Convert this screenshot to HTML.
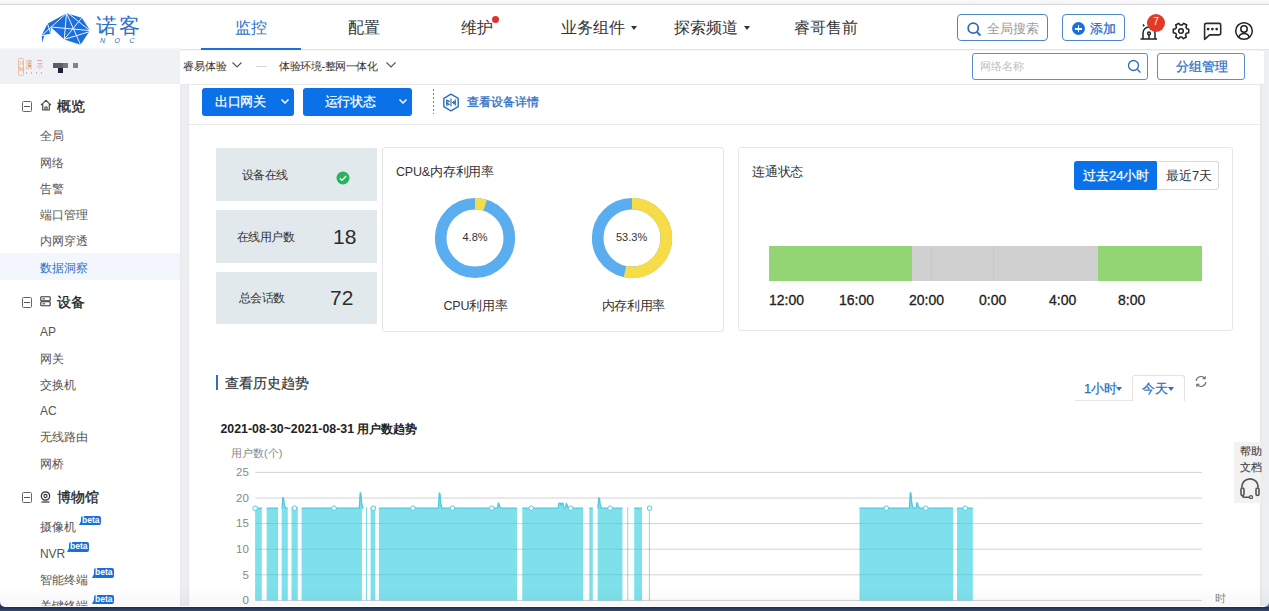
<!DOCTYPE html>
<html><head><meta charset="utf-8">
<style>
*{box-sizing:border-box;margin:0;padding:0}
html,body{width:1269px;height:611px;overflow:hidden;background:#fff;font-family:"Liberation Sans",sans-serif;color:#333}
.a{position:absolute;white-space:nowrap}
.t{line-height:1}
</style></head><body>
<!-- top strip -->
<div class="a" style="left:0;top:0;width:1269px;height:4px;background:linear-gradient(180deg,#f8f8fa,#f8f8fa 2.5px,#ececee)"></div>
<div class="a" style="left:0;top:4px;width:1269px;height:1px;background:#dadade"></div>
<!-- header -->
<div class="a" style="left:0;top:5px;width:1269px;height:44px;background:#fff"></div>
<div class="a" style="left:180px;top:49px;width:1089px;height:1px;background:#e4e4e4"></div><div class="a" style="left:180px;top:50px;width:1089px;height:1px;background:#f6f6f6"></div>

<!-- logo -->
<svg class="a" style="left:36px;top:8px" width="60" height="40" viewBox="0 0 60 40">
<polygon points="6.5,34.7 5.6,27.6 11.5,15.7 30.5,5.2 45.8,9.8 54,22.6 44.5,36.7 28.2,31.4 14.7,19 14.7,25.9 8.2,27.2" fill="#1b70de"/>
<g stroke="#fff" stroke-width="0.9" fill="none">
<line x1="30.5" y1="5.2" x2="28.2" y2="31.4"/>
<line x1="30.5" y1="5.2" x2="44.5" y2="36.7"/>
<line x1="30.5" y1="5.2" x2="6.5" y2="26.8"/>
<line x1="45.8" y1="9.8" x2="28.2" y2="31.4"/>
<line x1="14.7" y1="19" x2="54" y2="22.6"/>
<line x1="32" y1="5.2" x2="54" y2="22.6"/>
<line x1="28.2" y1="31.4" x2="54" y2="23.5"/>
<line x1="11.5" y1="15.7" x2="14.7" y2="25.9"/>
<line x1="4" y1="27.9" x2="15" y2="26.3"/>
</g>
</svg>
<div class="a t" style="left:96px;top:14.8px;font-size:21px;letter-spacing:1.8px;color:#2a6fc9">诺客</div>
<div class="a t" style="left:100px;top:37px;font-size:7px;color:#2a6fc9;font-style:italic;letter-spacing:9.5px">NOC</div>

<!-- nav -->
<div class="a t" style="left:235px;top:20px;font-size:16px;color:#2b6fc7">监控</div>
<div class="a" style="left:201px;top:48px;width:100px;height:2px;background:#1e6fd5"></div>
<div class="a t" style="left:348px;top:20px;font-size:16px;color:#333">配置</div>
<div class="a t" style="left:461px;top:20px;font-size:16px;color:#333">维护</div>
<div class="a" style="left:492px;top:16px;width:7px;height:7px;border-radius:50%;background:#e0322b"></div>
<div class="a t" style="left:561px;top:20px;font-size:16px;color:#333">业务组件</div>
<div class="a" style="left:631px;top:26px;border-left:3px solid transparent;border-right:3px solid transparent;border-top:4px solid #333"></div>
<div class="a t" style="left:674px;top:20px;font-size:16px;color:#333">探索频道</div>
<div class="a" style="left:744px;top:26px;border-left:3px solid transparent;border-right:3px solid transparent;border-top:4px solid #333"></div>
<div class="a t" style="left:794px;top:20px;font-size:16px;color:#333">睿哥售前</div>

<!-- search & add -->
<div class="a" style="left:957px;top:14px;width:91px;height:27px;border:1px solid #4f86c6;border-radius:4px"></div>
<svg class="a" style="left:967px;top:22px" width="15" height="15" viewBox="0 0 15 15"><circle cx="6.2" cy="6.2" r="5" stroke="#2f6cb8" stroke-width="1.8" fill="none"/><line x1="9.8" y1="9.8" x2="13.5" y2="13.5" stroke="#2f6cb8" stroke-width="1.8"/></svg>
<div class="a t" style="left:987px;top:22px;font-size:13px;color:#9a9a9a">全局搜索</div>
<div class="a" style="left:1062px;top:14px;width:63px;height:27px;border:1px solid #4f86c6;border-radius:4px"></div>
<div class="a" style="left:1072px;top:22px;width:13px;height:13px;border-radius:50%;background:#1b6fdc"></div>
<div class="a" style="left:1075px;top:28px;width:7px;height:1.6px;background:#fff"></div>
<div class="a" style="left:1077.7px;top:25.2px;width:1.6px;height:7px;background:#fff"></div>
<div class="a t" style="left:1090px;top:22px;font-size:13px;color:#2b6fc7;-webkit-text-stroke:0.25px #2b6fc7">添加</div>

<!-- icons -->
<svg class="a" style="left:1138px;top:20px" width="22" height="22" viewBox="0 0 22 22">
<g stroke="#222" stroke-width="1.5" fill="none">
<line x1="2.5" y1="19" x2="19" y2="19"/>
<path d="M5 19 V13 a6 6 0 0 1 12 0 V19"/>
<circle cx="11" cy="13.5" r="1.4"/>
<line x1="11" y1="15" x2="11" y2="19"/>
<line x1="5" y1="4.5" x2="6.2" y2="6.2"/>
</g></svg>
<div class="a" style="left:1147px;top:13.5px;width:18px;height:18px;border-radius:50%;background:#e13a29;color:#fff;font-size:10px;text-align:center;line-height:15px">7</div>
<svg class="a" style="left:1170.5px;top:20.8px" width="20" height="20" viewBox="0 0 20 20">
<path transform="rotate(90 10 10)" d="M8.3 2.3h3.4l.5 2.3 1.6.9 2.2-.8 1.7 2.9-1.7 1.6v1.6l1.7 1.6-1.7 2.9-2.2-.8-1.6.9-.5 2.3H8.3l-.5-2.3-1.6-.9-2.2.8-1.7-2.9 1.7-1.6V8.8L2.3 7.2 4 4.3l2.2.8 1.6-.9z" stroke="#222" stroke-width="1.5" fill="none" stroke-linejoin="round"/>
<circle cx="10" cy="10" r="2.3" stroke="#222" stroke-width="1.5" fill="none"/>
</svg>
<svg class="a" style="left:1202px;top:20.5px" width="21" height="20" viewBox="0 0 21 20">
<path d="M2.6 4a1.6 1.6 0 0 1 1.6-1.6h12.9a1.6 1.6 0 0 1 1.6 1.6v8.3a1.6 1.6 0 0 1-1.6 1.6H7.6L2.6 18.3z" stroke="#2a2a30" stroke-width="1.6" fill="none" stroke-linejoin="round"/>
<circle cx="6.1" cy="8.1" r="1.4" fill="#2a2a30"/><circle cx="10.4" cy="8.1" r="1.4" fill="#2a2a30"/><circle cx="14.7" cy="8.1" r="1.4" fill="#2a2a30"/>
</svg>
<svg class="a" style="left:1234px;top:20.5px" width="20" height="20" viewBox="0 0 20 20">
<circle cx="10" cy="10" r="8.3" stroke="#222" stroke-width="1.5" fill="none"/>
<circle cx="10" cy="8" r="3.2" stroke="#222" stroke-width="1.5" fill="none"/>
<path d="M4.6 16.2c1.2-2.6 3-3.6 5.4-3.6s4.2 1 5.4 3.6" stroke="#222" stroke-width="1.5" fill="none"/>
</svg>

<!-- sidebar -->
<div class="a" style="left:0;top:48px;width:180px;height:36px;background:linear-gradient(180deg,#f6f7f9,#eff1f5 2px)"></div>
<div class="a" style="left:0;top:84px;width:180px;height:523px;background:#fff"></div>


<!-- sidebar logo -->
<div class="a" style="left:17.5px;top:58px;width:6px;height:17.5px;border:1px solid #ecbfa3;border-radius:1.5px"></div>
<div class="a t" style="left:18.5px;top:60px;font-size:5px;line-height:6px;color:#e49a6a;white-space:normal;width:5px">只制</div>
<div class="a t" style="left:25.5px;top:59.5px;font-size:10px;color:#e07b3c;transform:scaleX(0.6);transform-origin:0 0">演</div>
<div class="a t" style="left:36.5px;top:60px;font-size:9.5px;color:#e49a6a;transform:scaleX(0.6);transform-origin:0 0">示</div>
<div class="a" style="left:37px;top:60px;width:5px;height:1px;background:#eaa0b0"></div>
<div class="a" style="left:26px;top:71.5px;width:16px;height:2.5px;background:repeating-linear-gradient(90deg,#e8b08e 0 1px,transparent 1px 5px)"></div>
<div class="a" style="left:53px;top:63px;width:10px;height:5px;background:#5c5f68"></div>
<div class="a" style="left:63px;top:63px;width:5px;height:5px;background:#78797e"></div>
<div class="a" style="left:58px;top:68px;width:5px;height:4.5px;background:#1e2136"></div>
<div class="a" style="left:72.7px;top:63px;width:5px;height:5px;background:#808289"></div>

<!-- sidebar menu -->
<div class="a" style="left:0;top:253px;width:180px;height:27px;background:#f3f7fd"></div>
<div class="a" style="left:21.5px;top:101px;width:10.5px;height:10.5px;border:1px solid #666;border-radius:1.5px"></div>
<div class="a" style="left:24px;top:106px;width:5.5px;height:1px;background:#555"></div>
<svg class="a" style="left:39.5px;top:99px" width="12" height="12" viewBox="0 0 12 12"><path d="M1 6.2 6 1.3 11 6.2M2.7 4.7V11H9.3V4.7M5 11V8H7V11" stroke="#444" stroke-width="1.15" fill="none" stroke-linejoin="round"/></svg>
<div class="a t" style="left:57px;top:99px;font-size:14px;color:#222;-webkit-text-stroke:0.3px #222">概览</div>
<div class="a t" style="left:40px;top:130.2px;font-size:12px;letter-spacing:-0.1px;color:#555">全局</div>
<div class="a t" style="left:40px;top:156.5px;font-size:12px;letter-spacing:-0.1px;color:#555">网络</div>
<div class="a t" style="left:40px;top:182.8px;font-size:12px;letter-spacing:-0.1px;color:#555">告警</div>
<div class="a t" style="left:40px;top:209.1px;font-size:12px;letter-spacing:-0.1px;color:#555">端口管理</div>
<div class="a t" style="left:40px;top:235.4px;font-size:12px;letter-spacing:-0.1px;color:#555">内网穿透</div>
<div class="a t" style="left:40px;top:261.7px;font-size:12px;letter-spacing:-0.1px;color:#2b6fc7">数据洞察</div>
<div class="a" style="left:21.5px;top:297px;width:10.5px;height:10.5px;border:1px solid #666;border-radius:1.5px"></div>
<div class="a" style="left:24px;top:302px;width:5.5px;height:1px;background:#555"></div>
<svg class="a" style="left:40px;top:296px" width="11" height="11" viewBox="0 0 11 11"><rect x="0.8" y="0.8" width="9.4" height="4" rx=".8" stroke="#333" stroke-width="1.1" fill="none"/><rect x="0.8" y="5.8" width="9.4" height="4" rx=".8" stroke="#333" stroke-width="1.1" fill="none"/><line x1="2.5" y1="2.8" x2="5" y2="2.8" stroke="#333" stroke-width="1"/><line x1="2.5" y1="7.8" x2="5" y2="7.8" stroke="#333" stroke-width="1"/></svg>
<div class="a t" style="left:57px;top:295px;font-size:14px;color:#222;-webkit-text-stroke:0.3px #222">设备</div>
<div class="a t" style="left:40px;top:326.2px;font-size:12px;letter-spacing:-0.1px;color:#555">AP</div>
<div class="a t" style="left:40px;top:352.5px;font-size:12px;letter-spacing:-0.1px;color:#555">网关</div>
<div class="a t" style="left:40px;top:378.8px;font-size:12px;letter-spacing:-0.1px;color:#555">交换机</div>
<div class="a t" style="left:40px;top:405.1px;font-size:12px;letter-spacing:-0.1px;color:#555">AC</div>
<div class="a t" style="left:40px;top:431.4px;font-size:12px;letter-spacing:-0.1px;color:#555">无线路由</div>
<div class="a t" style="left:40px;top:457.7px;font-size:12px;letter-spacing:-0.1px;color:#555">网桥</div>
<div class="a" style="left:21.5px;top:492px;width:10.5px;height:10.5px;border:1px solid #666;border-radius:1.5px"></div>
<div class="a" style="left:24px;top:497px;width:5.5px;height:1px;background:#555"></div>
<svg class="a" style="left:40px;top:491px" width="11" height="12" viewBox="0 0 11 12"><circle cx="5.5" cy="5" r="4.2" stroke="#333" stroke-width="1.2" fill="none"/><circle cx="5.5" cy="5" r="1.6" stroke="#333" stroke-width="1.1" fill="none"/><line x1="1.5" y1="11" x2="9.5" y2="11" stroke="#333" stroke-width="1.2"/></svg>
<div class="a t" style="left:57px;top:490px;font-size:14px;color:#222;-webkit-text-stroke:0.3px #222">博物馆</div>
<div class="a t" style="left:40px;top:521.2px;font-size:12px;letter-spacing:-0.1px;color:#555">摄像机</div>
<div class="a" style="left:81.0px;top:515.7px;width:19.5px;height:9.7px;background:#1b6fdc;border-radius:2px;color:#fff;font-size:8.5px;line-height:9.7px;text-align:center;font-weight:bold">beta</div><div class="a" style="left:78.5px;top:519.4px;width:0;height:0;border-left:3px solid transparent;border-bottom:6px solid #1b6fdc"></div>
<div class="a t" style="left:40px;top:547.5px;font-size:12px;letter-spacing:-0.1px;color:#555">NVR</div>
<div class="a" style="left:69.0px;top:542.0px;width:19.5px;height:9.7px;background:#1b6fdc;border-radius:2px;color:#fff;font-size:8.5px;line-height:9.7px;text-align:center;font-weight:bold">beta</div><div class="a" style="left:66.5px;top:545.6999999999999px;width:0;height:0;border-left:3px solid transparent;border-bottom:6px solid #1b6fdc"></div>
<div class="a t" style="left:40px;top:573.8px;font-size:12px;letter-spacing:-0.1px;color:#555">智能终端</div>
<div class="a" style="left:94.0px;top:568.3px;width:19.5px;height:9.7px;background:#1b6fdc;border-radius:2px;color:#fff;font-size:8.5px;line-height:9.7px;text-align:center;font-weight:bold">beta</div><div class="a" style="left:91.5px;top:571.9999999999999px;width:0;height:0;border-left:3px solid transparent;border-bottom:6px solid #1b6fdc"></div>
<div class="a t" style="left:40px;top:600.1px;font-size:12px;letter-spacing:-0.1px;color:#555">关键终端</div>
<div class="a" style="left:94.0px;top:594.5999999999999px;width:19.5px;height:9.7px;background:#1b6fdc;border-radius:2px;color:#fff;font-size:8.5px;line-height:9.7px;text-align:center;font-weight:bold">beta</div><div class="a" style="left:91.5px;top:598.2999999999998px;width:0;height:0;border-left:3px solid transparent;border-bottom:6px solid #1b6fdc"></div>

<!-- content bg -->
<div class="a" style="left:180px;top:83px;width:1080px;height:524px;background:#ebeef2"></div><div class="a" style="left:180px;top:83px;width:9px;height:524px;background:linear-gradient(90deg,#e6e8eb,#eceef2 2px,#eceef2 7px,#e4e6ea)"></div>
<div class="a" style="left:1260px;top:50px;width:9px;height:557px;background:linear-gradient(90deg,#e2e4e8,#ebeef1 2px,#edf1f4)"></div>
<!-- subheader -->
<div class="a" style="left:180px;top:51px;width:1084px;height:34px;background:#fff;border-bottom:1px solid #e9e9e9"></div>
<!-- toolbar -->
<div class="a" style="left:189px;top:85px;width:1071px;height:40px;background:#fff;border-bottom:1px solid #ebebeb"></div>
<!-- main panel -->
<div class="a" style="left:189px;top:125px;width:1071px;height:482px;background:#fff"></div>


<!-- subheader content -->
<div class="a t" style="left:183px;top:61px;font-size:11px;color:#333">睿易体验</div>
<svg class="a" style="left:231px;top:61px" width="12" height="8" viewBox="0 0 12 8"><path d="M1.5 1.5 6 6 10.5 1.5" stroke="#555" stroke-width="1.1" fill="none"/></svg>
<div class="a" style="left:256px;top:66px;width:11px;height:1px;background:#d6d6d6"></div>
<div class="a t" style="left:279px;top:61px;font-size:11px;letter-spacing:-0.4px;color:#333">体验环境-整网一体化</div>
<svg class="a" style="left:385px;top:61px" width="12" height="8" viewBox="0 0 12 8"><path d="M1.5 1.5 6 6 10.5 1.5" stroke="#555" stroke-width="1.1" fill="none"/></svg>
<div class="a" style="left:972px;top:53px;width:176px;height:27px;border:1px solid #5a8dcc;border-radius:3px"></div>
<div class="a t" style="left:980px;top:61px;font-size:11px;color:#c0c0c0">网络名称</div>
<svg class="a" style="left:1127px;top:59px" width="15" height="15" viewBox="0 0 15 15"><circle cx="6.5" cy="6.5" r="5" stroke="#2f6cb8" stroke-width="1.3" fill="none"/><line x1="10.2" y1="10.2" x2="13.5" y2="13.5" stroke="#2f6cb8" stroke-width="1.3"/></svg>
<div class="a" style="left:1157px;top:53px;width:88px;height:27px;border:1px solid #5a8dcc;border-radius:3px"></div>
<div class="a t" style="left:1175.5px;top:60px;font-size:13px;color:#2b6fc7;-webkit-text-stroke:0.25px #2b6fc7">分组管理</div>

<!-- toolbar content -->
<div class="a" style="left:202px;top:87.5px;width:92px;height:28px;background:#0a71e8;border-radius:3px"></div>
<div class="a t" style="left:215px;top:95.5px;font-size:12.5px;letter-spacing:-0.3px;color:#fff;-webkit-text-stroke:0.25px #fff">出口网关</div>
<svg class="a" style="left:280px;top:98px" width="10" height="7" viewBox="0 0 10 7"><path d="M1.5 1.5 5 5 8.5 1.5" stroke="#fff" stroke-width="1.5" fill="none"/></svg>
<div class="a" style="left:303px;top:87.5px;width:109px;height:28px;background:#0a71e8;border-radius:3px"></div>
<div class="a t" style="left:324.5px;top:95.5px;font-size:12.5px;letter-spacing:-0.3px;color:#fff;-webkit-text-stroke:0.25px #fff">运行状态</div>
<svg class="a" style="left:398px;top:98px" width="10" height="7" viewBox="0 0 10 7"><path d="M1.5 1.5 5 5 8.5 1.5" stroke="#fff" stroke-width="1.5" fill="none"/></svg>
<div class="a" style="left:433px;top:89px;width:1px;height:25px;background:repeating-linear-gradient(180deg,#4b7fbf 0 2px,transparent 2px 4px)"></div>
<svg class="a" style="left:442px;top:93px" width="18" height="19" viewBox="0 0 18 19">
<path d="M9 1.2 16.2 5.3V13.7L9 17.8 1.8 13.7V5.3z" stroke="#2f6cb8" stroke-width="1.4" fill="none" stroke-linejoin="round"/>
<line x1="9" y1="5.5" x2="9" y2="13.5" stroke="#2f6cb8" stroke-width="1.1"/>
<line x1="13.3" y1="6.5" x2="13.3" y2="12.5" stroke="#2f6cb8" stroke-width="1.2"/>
<path d="M10 9.5h2.6M11.3 8l1.5 1.5-1.5 1.5" stroke="#2f6cb8" stroke-width="1.1" fill="none"/>
<path d="M4.6 6.5v6M5.2 7.3l2 1-2 1M5.2 10.3l2 1-2 1" stroke="#2f6cb8" stroke-width="1.1" fill="none"/>
</svg>
<div class="a t" style="left:466.5px;top:95.5px;font-size:12.3px;color:#2b6fc7;-webkit-text-stroke:0.3px #2b6fc7">查看设备详情</div>


<!-- stat boxes -->
<div class="a" style="left:216px;top:148px;width:161px;height:53px;background:#e2e9ec"></div>
<div class="a" style="left:216px;top:210px;width:161px;height:53px;background:#e2e9ec"></div>
<div class="a" style="left:216px;top:272px;width:161px;height:52px;background:#e2e9ec"></div>
<div class="a t" style="left:241.5px;top:169px;font-size:12px;letter-spacing:-0.4px;color:#333">设备在线</div>
<svg class="a" style="left:336px;top:171px" width="14" height="14" viewBox="0 0 14 14"><circle cx="7" cy="7" r="6.5" fill="#27b35e"/><path d="M3.8 7.2 6 9.3 10.2 5" stroke="#fff" stroke-width="1.3" fill="none"/></svg>
<div class="a t" style="left:236.5px;top:230.5px;font-size:12px;letter-spacing:-0.4px;color:#333">在线用户数</div>
<div class="a t" style="left:333px;top:226px;font-size:21px;color:#2c2c2c">18</div>
<div class="a t" style="left:238.5px;top:292px;font-size:12px;letter-spacing:-0.4px;color:#333">总会话数</div>
<div class="a t" style="left:330px;top:287px;font-size:21px;color:#2c2c2c">72</div>

<!-- cpu panel -->
<div class="a" style="left:382px;top:147px;width:342px;height:185px;border:1px solid #e6e6e6;border-radius:3px"></div>
<div class="a t" style="left:396px;top:165.5px;font-size:12.5px;letter-spacing:-0.2px;color:#333">CPU&amp;内存利用率</div>
<svg class="a" style="left:432.6px;top:195.9px" width="84" height="84" viewBox="432.6 195.9 84 84"><circle cx="474.6" cy="237.9" r="34.3" stroke="#5aaeef" stroke-width="11.6" fill="none"/><path d="M474.60 203.60A34.3 34.3 0 0 1 484.79 205.15" stroke="#f6dd48" stroke-width="11.6" fill="none"/></svg>
<svg class="a" style="left:589.6px;top:195.9px" width="84" height="84" viewBox="589.6 195.9 84 84"><circle cx="631.6" cy="237.9" r="34.3" stroke="#5aaeef" stroke-width="11.6" fill="none"/><path d="M631.60 203.60A34.3 34.3 0 1 1 624.54 271.47" stroke="#f6dd48" stroke-width="11.6" fill="none"/></svg>
<div class="a t" style="left:462.5px;top:232px;font-size:11px;color:#333">4.8%</div>
<div class="a t" style="left:616px;top:232px;font-size:11px;color:#333">53.3%</div>
<div class="a t" style="left:443.5px;top:300px;font-size:12.5px;letter-spacing:-0.2px;color:#333">CPU利用率</div>
<div class="a t" style="left:601.5px;top:300px;font-size:12.5px;letter-spacing:-0.3px;color:#333">内存利用率</div>

<!-- connectivity panel -->
<div class="a" style="left:738px;top:147px;width:495px;height:184px;border:1px solid #e6e6e6;border-radius:3px"></div>
<div class="a t" style="left:752px;top:165.5px;font-size:12.5px;letter-spacing:-0.2px;color:#333">连通状态</div>
<div class="a" style="left:1073.5px;top:161px;width:83px;height:29px;background:#0a71e8;border-radius:3px 0 0 3px"></div>
<div class="a t" style="left:1083px;top:169px;font-size:13px;color:#fff;-webkit-text-stroke:0.25px #fff">过去24小时</div>
<div class="a" style="left:1156px;top:161px;width:63px;height:29px;border:1px solid #d9d9d9;border-left:none;border-radius:0 3px 3px 0"></div>
<div class="a t" style="left:1166px;top:169px;font-size:13px;color:#333">最近7天</div>
<div class="a" style="left:769px;top:246px;width:433px;height:35px;background:#d0d0d0"></div>
<div class="a" style="left:769px;top:246px;width:143px;height:35px;background:#93d474"></div>
<div class="a" style="left:1098px;top:246px;width:104px;height:35px;background:#93d474"></div>
<div class="a" style="left:931px;top:246px;width:1px;height:35px;background:#b8d7a8"></div>
<div class="a" style="left:993px;top:246px;width:1px;height:35px;background:#b8d7a8"></div>
<div class="a t" style="left:769px;top:292.5px;font-size:14px;color:#222;-webkit-text-stroke:0.3px #222">12:00</div>
<div class="a t" style="left:839px;top:292.5px;font-size:14px;color:#222;-webkit-text-stroke:0.3px #222">16:00</div>
<div class="a t" style="left:909px;top:292.5px;font-size:14px;color:#222;-webkit-text-stroke:0.3px #222">20:00</div>
<div class="a t" style="left:979px;top:292.5px;font-size:14px;color:#222;-webkit-text-stroke:0.3px #222">0:00</div>
<div class="a t" style="left:1049px;top:292.5px;font-size:14px;color:#222;-webkit-text-stroke:0.3px #222">4:00</div>
<div class="a t" style="left:1118px;top:292.5px;font-size:14px;color:#222;-webkit-text-stroke:0.3px #222">8:00</div>


<!-- history -->
<div class="a" style="left:216px;top:375px;width:2px;height:15px;background:#2b6fc7"></div>
<div class="a t" style="left:225px;top:375.5px;font-size:14px;color:#333;-webkit-text-stroke:0.2px #333">查看历史趋势</div>
<div class="a" style="left:1075px;top:399.5px;width:57px;height:1px;background:#e6e6e6"></div>
<div class="a t" style="left:1084px;top:382px;font-size:13px;color:#2b6fc7;-webkit-text-stroke:0.25px #2b6fc7">1小时</div>
<div class="a" style="left:1116px;top:387px;border-left:3.5px solid transparent;border-right:3.5px solid transparent;border-top:4px solid #2b6fc7"></div>
<div class="a" style="left:1132px;top:375px;width:53px;height:26px;border:1px solid #e3e3e3;border-bottom:none;border-radius:3px 3px 0 0;background:#fff"></div>
<div class="a t" style="left:1142px;top:382px;font-size:13px;color:#2b6fc7;-webkit-text-stroke:0.25px #2b6fc7">今天</div>
<div class="a" style="left:1168px;top:387px;border-left:3.5px solid transparent;border-right:3.5px solid transparent;border-top:4px solid #2b6fc7"></div>
<svg class="a" style="left:1194px;top:375px" width="14" height="13" viewBox="0 0 14 13">
<path d="M2.2 6a4.8 4.8 0 0 1 8.6-2.6M11.8 7a4.8 4.8 0 0 1-8.6 2.6" stroke="#666" stroke-width="1.1" fill="none"/>
<path d="M11.2 1.2v2.6H8.6M2.8 11.8V9.2h2.6" stroke="#666" stroke-width="1.1" fill="none"/>
</svg>
<div class="a t" style="left:220.5px;top:423.3px;font-size:12.35px;font-weight:bold;color:#222">2021-08-30~2021-08-31 用户数趋势</div>
<div class="a t" style="left:231px;top:448px;font-size:11px;color:#888">用户数(个)</div>
<div class="a t" style="left:200px;width:48.8px;text-align:right;top:467.1px;font-size:11.5px;color:#888">25</div>
<div class="a t" style="left:200px;width:48.8px;text-align:right;top:492.7px;font-size:11.5px;color:#888">20</div>
<div class="a t" style="left:200px;width:48.8px;text-align:right;top:518.3px;font-size:11.5px;color:#888">15</div>
<div class="a t" style="left:200px;width:48.8px;text-align:right;top:543.9px;font-size:11.5px;color:#888">10</div>
<div class="a t" style="left:200px;width:48.8px;text-align:right;top:569.5px;font-size:11.5px;color:#888">5</div>
<div class="a t" style="left:200px;width:48.8px;text-align:right;top:595.1px;font-size:11.5px;color:#888">0</div>
<div class="a t" style="left:1215px;top:593px;font-size:11px;color:#888">时</div>
<svg class="a" style="left:0;top:0" width="1269" height="611" viewBox="0 0 1269 611">
<line x1="255.4" y1="472.4" x2="1202" y2="472.4" stroke="#d2d2d2" stroke-width="1"/>
<line x1="255.4" y1="498.0" x2="1202" y2="498.0" stroke="#d2d2d2" stroke-width="1"/>
<line x1="255.4" y1="523.6" x2="1202" y2="523.6" stroke="#d2d2d2" stroke-width="1"/>
<line x1="255.4" y1="549.2" x2="1202" y2="549.2" stroke="#d2d2d2" stroke-width="1"/>
<line x1="255.4" y1="574.8" x2="1202" y2="574.8" stroke="#d2d2d2" stroke-width="1"/>
<line x1="255.4" y1="600.4" x2="1202" y2="600.4" stroke="#d2d2d2" stroke-width="1"/>
<g fill="rgba(40,203,222,0.6)"><path d="M255.1 600.4 L255.1 508.2 L261.8 508.2 L261.8 600.4Z"/><path d="M266.7 600.4 L266.7 508.2 L278.1 508.2 L278.1 600.4Z"/><path d="M281.7 600.4 L281.7 508.2 L282.0 508.2 L282.9 497.4 L283.6 498.4 L284.4 505.0 L285.6 508.2 L287.8 508.2 L287.8 600.4Z"/><path d="M291.5 600.4 L291.5 508.2 L297.8 508.2 L297.8 600.4Z"/><path d="M301.6 600.4 L301.6 508.2 L359.3 508.2 L360.2 492.7 L360.9 493.7 L361.7 503.6 L362.9 508.2 L361.9 508.2 L361.9 600.4Z"/><path d="M366.0 600.4 L366.0 508.2 L367.0 508.2 L367.0 600.4Z"/><path d="M370.6 600.4 L370.6 508.2 L375.3 508.2 L375.3 600.4Z"/><path d="M378.9 600.4 L378.9 508.2 L438.4 508.2 L439.3 492.8 L440.0 493.8 L440.8 503.6 L442.0 508.2 L497.4 508.2 L498.3 503.0 L499.0 504.0 L499.8 506.7 L501.0 508.2 L517.0 508.2 L517.0 600.4Z"/><path d="M522.3 600.4 L522.3 508.2 L558.0 508.2 L559.0 503.2 L560.3 503.2 L561.1 505.2 L561.7 503.2 L562.8 503.2 L564.0 508.2 L565.4 508.2 L566.3 503.5 L567.0 504.5 L567.8 506.8 L569.0 508.2 L583.0 508.2 L583.0 600.4Z"/><path d="M589.3 600.4 L589.3 508.2 L592.8 508.2 L592.8 600.4Z"/><path d="M597.7 600.4 L597.7 508.2 L597.9 508.2 L598.8 497.7 L599.5 498.7 L600.3 505.1 L601.5 508.2 L622.4 508.2 L622.4 600.4Z"/><path d="M627.2 600.4 L627.2 508.2 L628.2 508.2 L628.2 600.4Z"/><path d="M634.2 600.4 L634.2 508.2 L642.0 508.2 L642.0 600.4Z"/><path d="M648.9 600.4 L648.9 508.2 L649.9 508.2 L649.9 600.4Z"/><path d="M859.5 600.4 L859.5 508.2 L909.4 508.2 L910.3 492.6 L911.0 493.6 L911.8 503.5 L913.0 508.2 L916.0 508.2 L916.9 502.7 L917.6 503.7 L918.4 506.6 L919.6 508.2 L953.2 508.2 L953.2 600.4Z"/><path d="M957.0 600.4 L957.0 508.2 L972.8 508.2 L972.8 600.4Z"/></g>
<g fill="none" stroke="#52c8de" stroke-width="1.3" stroke-linejoin="round"><path d="M255.1 508.2 L261.8 508.2"/><path d="M266.7 508.2 L278.1 508.2"/><path d="M281.7 508.2 L282.0 508.2 L282.9 497.4 L283.6 498.4 L284.4 505.0 L285.6 508.2 L287.8 508.2"/><path d="M291.5 508.2 L297.8 508.2"/><path d="M301.6 508.2 L359.3 508.2 L360.2 492.7 L360.9 493.7 L361.7 503.6 L362.9 508.2 L361.9 508.2"/><path d="M366.0 508.2 L367.0 508.2"/><path d="M370.6 508.2 L375.3 508.2"/><path d="M378.9 508.2 L438.4 508.2 L439.3 492.8 L440.0 493.8 L440.8 503.6 L442.0 508.2 L497.4 508.2 L498.3 503.0 L499.0 504.0 L499.8 506.7 L501.0 508.2 L517.0 508.2"/><path d="M522.3 508.2 L558.0 508.2 L559.0 503.2 L560.3 503.2 L561.1 505.2 L561.7 503.2 L562.8 503.2 L564.0 508.2 L565.4 508.2 L566.3 503.5 L567.0 504.5 L567.8 506.8 L569.0 508.2 L583.0 508.2"/><path d="M589.3 508.2 L592.8 508.2"/><path d="M597.7 508.2 L597.9 508.2 L598.8 497.7 L599.5 498.7 L600.3 505.1 L601.5 508.2 L622.4 508.2"/><path d="M627.2 508.2 L628.2 508.2"/><path d="M634.2 508.2 L642.0 508.2"/><path d="M648.9 508.2 L649.9 508.2"/><path d="M859.5 508.2 L909.4 508.2 L910.3 492.6 L911.0 493.6 L911.8 503.5 L913.0 508.2 L916.0 508.2 L916.9 502.7 L917.6 503.7 L918.4 506.6 L919.6 508.2 L953.2 508.2"/><path d="M957.0 508.2 L972.8 508.2"/></g>
<g fill="#fff" stroke="#58c9de" stroke-width="1"><circle cx="255.1" cy="508.2" r="2.3"/><circle cx="294.6" cy="508.2" r="2.3"/><circle cx="334.0" cy="508.2" r="2.3"/><circle cx="373.4" cy="508.2" r="2.3"/><circle cx="412.9" cy="508.2" r="2.3"/><circle cx="452.4" cy="508.2" r="2.3"/><circle cx="491.8" cy="508.2" r="2.3"/><circle cx="531.2" cy="508.2" r="2.3"/><circle cx="570.7" cy="508.2" r="2.3"/><circle cx="610.1" cy="508.2" r="2.3"/><circle cx="649.6" cy="508.2" r="2.3"/><circle cx="886.3" cy="508.2" r="2.3"/><circle cx="925.8" cy="508.2" r="2.3"/><circle cx="965.2" cy="508.2" r="2.3"/></g>
</svg>

<!-- help -->
<div class="a" style="left:1234px;top:442px;width:27px;height:61px;background:#f2f2f2"></div>
<div class="a t" style="left:1240px;top:445.5px;font-size:10.5px;color:#444;-webkit-text-stroke:0.15px #444">帮助</div>
<div class="a t" style="left:1240px;top:461.5px;font-size:10.5px;color:#444;-webkit-text-stroke:0.15px #444">文档</div>
<svg class="a" style="left:1238px;top:477px" width="24" height="22" viewBox="0 0 24 22">
<path d="M3.8 10.5V10a8.2 8.2 0 0 1 16.4 0v.5" stroke="#555" stroke-width="1.7" fill="none"/>
<rect x="3" y="11" width="3" height="7.5" rx="1.5" stroke="#555" stroke-width="1.6" fill="none"/>
<rect x="18" y="11" width="3" height="7.5" rx="1.5" stroke="#555" stroke-width="1.6" fill="none"/>
<path d="M4.5 18.5c0 1.2.8 1.8 2 1.8h5.5" stroke="#555" stroke-width="1.6" fill="none"/>
<circle cx="13" cy="20.2" r="1.5" stroke="#555" stroke-width="1.3" fill="#f2f2f2"/>
</svg>

<!-- bottom bar -->
<div class="a" style="left:0;top:586px;width:1269px;height:20px;background:linear-gradient(180deg,rgba(0,0,0,0),rgba(0,0,0,0.03))"></div>
<div class="a" style="left:0;top:606px;width:1269px;height:1px;background:rgba(255,255,255,.9)"></div>
<div class="a" style="left:0;top:607px;width:1269px;height:4px;background:linear-gradient(180deg,#1c2944,#2c3b5e 2px,#34466b)"></div>
<svg class="a" style="left:0;top:602px" width="6" height="5" viewBox="0 0 6 5"><path d="M0 0V5H5A5 5 0 0 1 0 0Z" fill="#2a3957"/></svg>
<svg class="a" style="left:1263px;top:602px" width="6" height="5" viewBox="0 0 6 5"><path d="M6 0V5H1A5 5 0 0 0 6 0Z" fill="#5a6a88"/></svg>
</body></html>
